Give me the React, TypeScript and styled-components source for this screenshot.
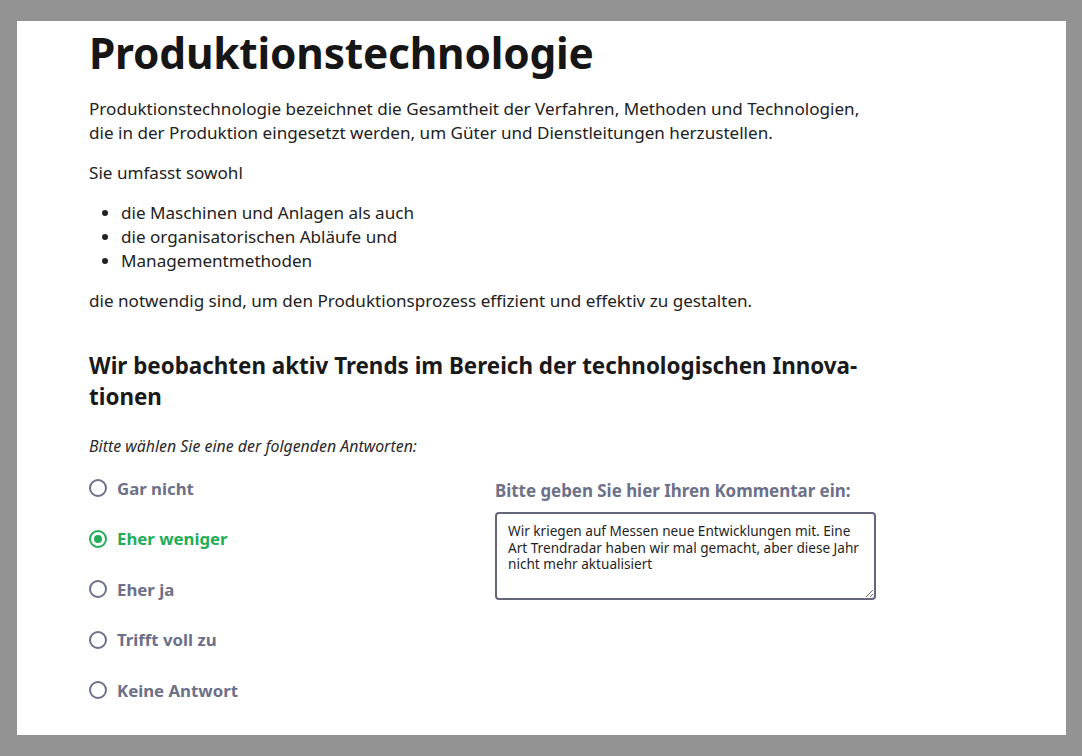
import React from 'react';
import styled, { createGlobalStyle } from 'styled-components';

const GlobalStyle = createGlobalStyle`
  html, body {
    margin: 0;
    padding: 0;
    background: #939393;
  }
  body {
    font-family: "Noto Sans", "Open Sans", sans-serif;
    color: #1f1f1f;
  }
`;

const options = ['Gar nicht', 'Eher weniger', 'Eher ja', 'Trifft voll zu', 'Keine Antwort'];

const Frame = styled.div`
  padding: 21px 16px 21px 17px;
  height: 756px;
  box-sizing: border-box;
`;

const Sheet = styled.main`
  background: #ffffff;
  height: 714px;
  padding: 4px 0 0 72px;
  box-sizing: border-box;
  overflow: hidden;
`;

const Content = styled.div`
  width: 787px;
`;

const Title = styled.h1`
  margin: 0 0 16px;
  font-size: 42.4px;
  line-height: 56px;
  font-weight: 700;
  color: #161616;
  letter-spacing: -0.2px;
`;

const Paragraph = styled.p`
  margin: 0 0 16px;
  font-size: 17.1px;
  line-height: 24px;
  color: #222222;
`;

const Bullets = styled.ul`
  margin: 0 0 16px;
  padding-left: 32px;
  font-size: 17.1px;
  line-height: 24px;
  color: #222222;
`;

const Question = styled.h2`
  margin: 37px 0 23px;
  font-size: 22.4px;
  line-height: 31px;
  font-weight: 700;
  color: #1a1a1a;
`;

const Hint = styled.p`
  margin: 0 0 19px;
  font-size: 15.9px;
  line-height: 22px;
  font-style: italic;
  color: #2a2a2a;
`;

const Answers = styled.div`
  display: grid;
  grid-template-columns: 406px 381px;
`;

const RadioList = styled.div`
  display: flex;
  flex-direction: column;
  gap: 26.6px;
`;

const RadioRow = styled.label<{ $active: boolean }>`
  display: flex;
  align-items: center;
  gap: 10px;
  height: 24px;
  font-size: 16.8px;
  font-weight: 700;
  color: ${({ $active }) => ($active ? '#1fae57' : '#6c7089')};
  cursor: pointer;
`;

const RadioDot = styled.span<{ $active: boolean }>`
  width: 18px;
  height: 18px;
  box-sizing: border-box;
  border-radius: 50%;
  border: 2px solid ${({ $active }) => ($active ? '#1fae57' : '#6c7089')};
  display: flex;
  align-items: center;
  justify-content: center;

  &::after {
    content: '';
    width: 8px;
    height: 8px;
    border-radius: 50%;
    background: ${({ $active }) => ($active ? '#1fae57' : 'transparent')};
  }
`;

const CommentBox = styled.div`
  display: flex;
  flex-direction: column;
  padding-top: 3px;
`;

const CommentLabel = styled.label`
  font-size: 16.9px;
  font-weight: 700;
  line-height: 24px;
  color: #6c7089;
  margin-bottom: 9px;
`;

const CommentArea = styled.textarea`
  width: 381px;
  height: 88px;
  box-sizing: border-box;
  border: 2px solid #636779;
  border-radius: 4px;
  padding: 9px 11px;
  font-family: "Noto Sans", "Open Sans", sans-serif;
  font-size: 13.6px;
  line-height: 16.5px;
  color: #1f1f1f;
  resize: vertical;
  outline: none;
`;

export default function App() {
  return (
    <>
      <GlobalStyle />
      <Frame>
        <Sheet>
          <Content>
            <Title>Produktionstechnologie</Title>
            <Paragraph>
              Produktionstechnologie bezeichnet die Gesamtheit der Verfahren, Methoden und Technologien,
              die in der Produktion eingesetzt werden, um Güter und Dienstleitungen herzustellen.
            </Paragraph>
            <Paragraph>Sie umfasst sowohl</Paragraph>
            <Bullets>
              <li>die Maschinen und Anlagen als auch</li>
              <li>die organisatorischen Abläufe und</li>
              <li>Managementmethoden</li>
            </Bullets>
            <Paragraph>
              die notwendig sind, um den Produktionsprozess effizient und effektiv zu gestalten.
            </Paragraph>
            <Question>
              Wir beobachten aktiv Trends im Bereich der technologischen Innova{'\u00AD'}tionen
            </Question>
            <Hint>Bitte wählen Sie eine der folgenden Antworten:</Hint>
            <Answers>
              <RadioList>
                {options.map((o) => {
                  const active = o === 'Eher weniger';
                  return (
                    <RadioRow key={o} $active={active}>
                      <RadioDot $active={active} />
                      {o}
                    </RadioRow>
                  );
                })}
              </RadioList>
              <CommentBox>
                <CommentLabel>Bitte geben Sie hier Ihren Kommentar ein:</CommentLabel>
                <CommentArea
                  defaultValue="Wir kriegen auf Messen neue Entwicklungen mit. Eine Art Trendradar haben wir mal gemacht, aber diese Jahr nicht mehr aktualisiert"
                />
              </CommentBox>
            </Answers>
          </Content>
        </Sheet>
      </Frame>
    </>
  );
}
